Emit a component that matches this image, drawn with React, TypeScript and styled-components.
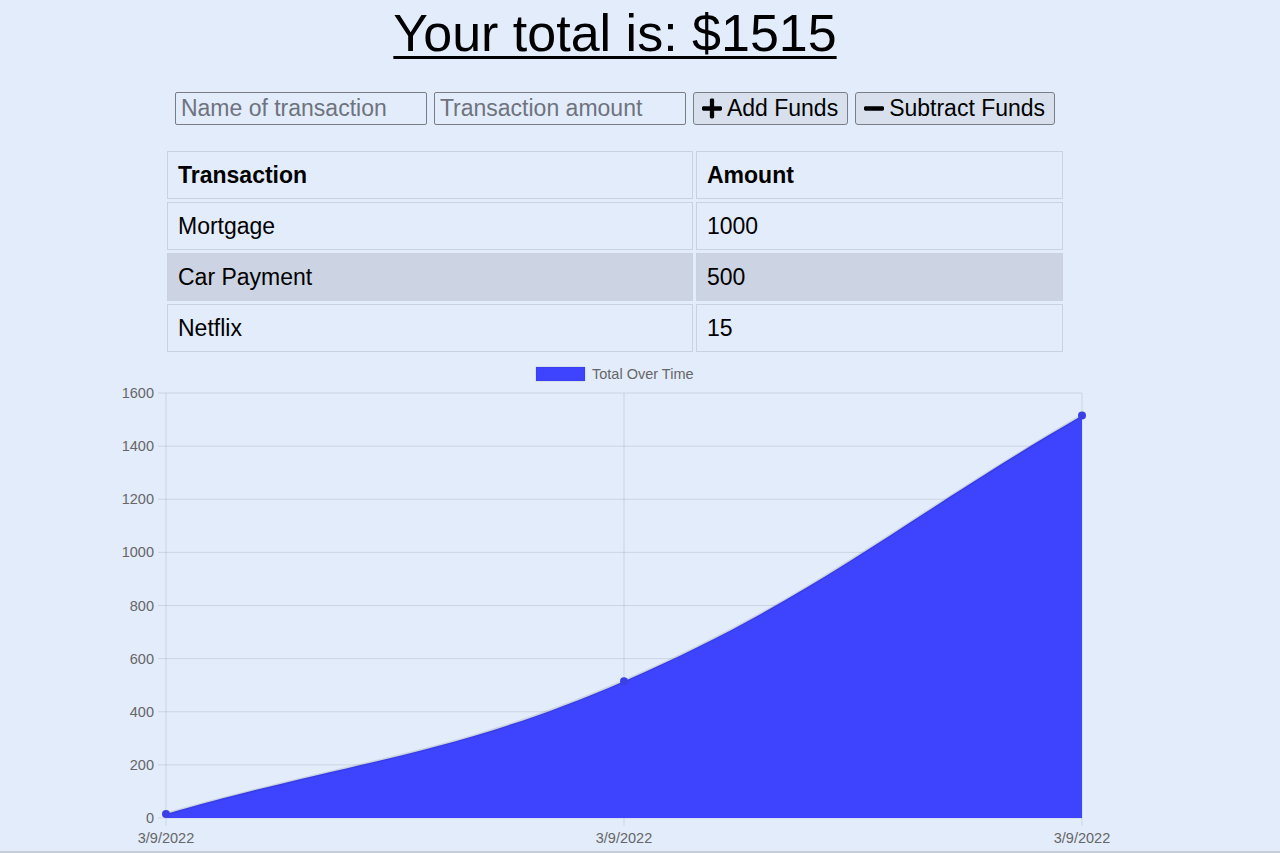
import React from "react";
import styled, { createGlobalStyle } from "styled-components";
import { FaPlus, FaMinus } from "react-icons/fa";

const GlobalStyle = createGlobalStyle`
  html, body {
    margin: 0;
    padding: 0;
    background: #e3ecfb;
  }
  body {
    font-family: "Liberation Sans", Arial, sans-serif;
    color: #000;
  }
`;

const Page = styled.div`
  width: 100%;
  height: 853px;
  box-sizing: border-box;
  padding-right: 50px;
  border-bottom: 2px solid #c6cdd9;
  display: flex;
  flex-direction: column;
  align-items: center;
  overflow: hidden;
`;

const Title = styled.h1`
  margin: 3px 0 0;
  font-size: 52px;
  line-height: 60px;
  font-weight: normal;
  text-decoration: underline;
  text-decoration-thickness: 3px;
  text-underline-offset: 5px;
`;

const Form = styled.div`
  margin-top: 29px;
  display: flex;
  gap: 7px;
  height: 33px;
`;

const Input = styled.input`
  width: 252px;
  height: 33px;
  box-sizing: border-box;
  padding: 0 5px;
  border: 1px solid #7a7d84;
  border-radius: 2px;
  background: transparent;
  font-family: "Liberation Sans", Arial, sans-serif;
  font-size: 23px;
  color: #000;
  outline: none;
  &::placeholder {
    color: #6e737d;
  }
`;

const Button = styled.button`
  height: 33px;
  box-sizing: border-box;
  display: inline-flex;
  align-items: center;
  gap: 5px;
  padding: 0 9px 0 8px;
  border: 1px solid #7a7e86;
  border-radius: 3px;
  background: #d8e0ee;
  font-family: "Liberation Sans", Arial, sans-serif;
  font-size: 23px;
  color: #000;
  cursor: pointer;
  svg {
    width: 20px;
    height: 23px;
  }
`;

const Table = styled.table`
  margin-top: 23px;
  width: 902px;
  border-collapse: separate;
  border-spacing: 3px;
  font-size: 23px;
`;

const Cell = styled.td<{ $wide?: boolean }>`
  width: ${(p) => (p.$wide ? "526px" : "367px")};
  box-sizing: border-box;
  border: 1px solid #c9d2e1;
  padding: 0 10px;
  line-height: 46px;
  height: 48px;
  text-align: left;
`;

const HeadCell = styled(Cell).attrs({ as: "th" })`
  font-weight: bold;
`;

const Row = styled.tr<{ $shaded?: boolean }>`
  background: ${(p) => (p.$shaded ? "#ccd3e2" : "transparent")};
`;

const Chart = styled.svg`
  margin-top: 3px;
  width: 1230px;
  height: 493px;
  flex-shrink: 0;
  display: block;
  font-family: "Liberation Sans", Helvetica, Arial, sans-serif;
`;

const rows = [
  { name: "Mortgage", amount: 1000 },
  { name: "Car Payment", amount: 500 },
  { name: "Netflix", amount: 15 },
];

const X0 = 166;
const X1 = 1082;
const Y0 = 818;
const Y1 = 393;
const scaleY = (v: number) => Y0 - (v / 1600) * (Y0 - Y1);

function TotalChart() {
  const totals = [15, 515, 1515];
  const xs = [X0, (X0 + X1) / 2, X1];
  const pts = totals.map((t, i) => ({ x: xs[i], y: scaleY(t) }));
  const tension = 0.4;
  const cps = pts.map((p, i) => {
    const prev = pts[i - 1] || p;
    const next = pts[i + 1] || p;
    const d01 = Math.hypot(p.x - prev.x, p.y - prev.y);
    const d12 = Math.hypot(next.x - p.x, next.y - p.y);
    const s = d01 + d12 || 1;
    const fa = (tension * d01) / s;
    const fb = (tension * d12) / s;
    return {
      prev: { x: p.x - fa * (next.x - prev.x), y: p.y - fa * (next.y - prev.y) },
      next: { x: p.x + fb * (next.x - prev.x), y: p.y + fb * (next.y - prev.y) },
    };
  });
  let line = `M${pts[0].x} ${pts[0].y}`;
  for (let i = 1; i < pts.length; i++) {
    const a = cps[i - 1].next;
    const b = cps[i].prev;
    line += ` C${a.x} ${a.y} ${b.x} ${b.y} ${pts[i].x} ${pts[i].y}`;
  }
  const area = `${line} L${X1} ${Y0} L${X0} ${Y0} Z`;
  const ticks = [0, 200, 400, 600, 800, 1000, 1200, 1400, 1600];
  const grid = "rgba(0,0,0,0.1)";

  return (
    <Chart viewBox="0 358 1230 493">
      <rect x={536} y={367} width={49} height={14} fill="#3e44fe" stroke="rgba(0,0,0,0.1)" />
      <text x={592} y={379} fontSize={14.5} fill="#666">
        Total Over Time
      </text>
      {ticks.map((t) => (
        <g key={t}>
          <line x1={158} x2={X1} y1={scaleY(t)} y2={scaleY(t)} stroke={grid} strokeWidth={1} />
          <text x={154} y={scaleY(t) + 5} fontSize={14.5} fill="#666" textAnchor="end">
            {t}
          </text>
        </g>
      ))}
      {xs.map((x, i) => (
        <g key={i}>
          <line x1={x} x2={x} y1={Y1} y2={826} stroke={grid} strokeWidth={1} />
          <text x={x} y={843} fontSize={14.5} fill="#666" textAnchor="middle">
            3/9/2022
          </text>
        </g>
      ))}
      <path d={area} fill="#3e44fe" />
      <path d={line} fill="none" stroke="rgba(0,0,0,0.1)" strokeWidth={3} />
      {pts.map((p, i) => (
        <circle key={i} cx={p.x} cy={p.y} r={4} fill="#3b40e4" />
      ))}
    </Chart>
  );
}

export default function App() {
  return (
    <>
      <GlobalStyle />
      <Page>
        <Title>Your total is: $1515</Title>
        <Form>
          <Input type="text" placeholder="Name of transaction" />
          <Input type="number" placeholder="Transaction amount" />
          <Button>
            <FaPlus />
            Add Funds
          </Button>
          <Button>
            <FaMinus />
            Subtract Funds
          </Button>
        </Form>
        <Table>
          <thead>
            <Row>
              <HeadCell $wide>Transaction</HeadCell>
              <HeadCell>Amount</HeadCell>
            </Row>
          </thead>
          <tbody>
            {rows.map((r, i) => (
              <Row key={r.name} $shaded={i % 2 === 1}>
                <Cell $wide>{r.name}</Cell>
                <Cell>{r.amount}</Cell>
              </Row>
            ))}
          </tbody>
        </Table>
        <TotalChart />
      </Page>
    </>
  );
}
